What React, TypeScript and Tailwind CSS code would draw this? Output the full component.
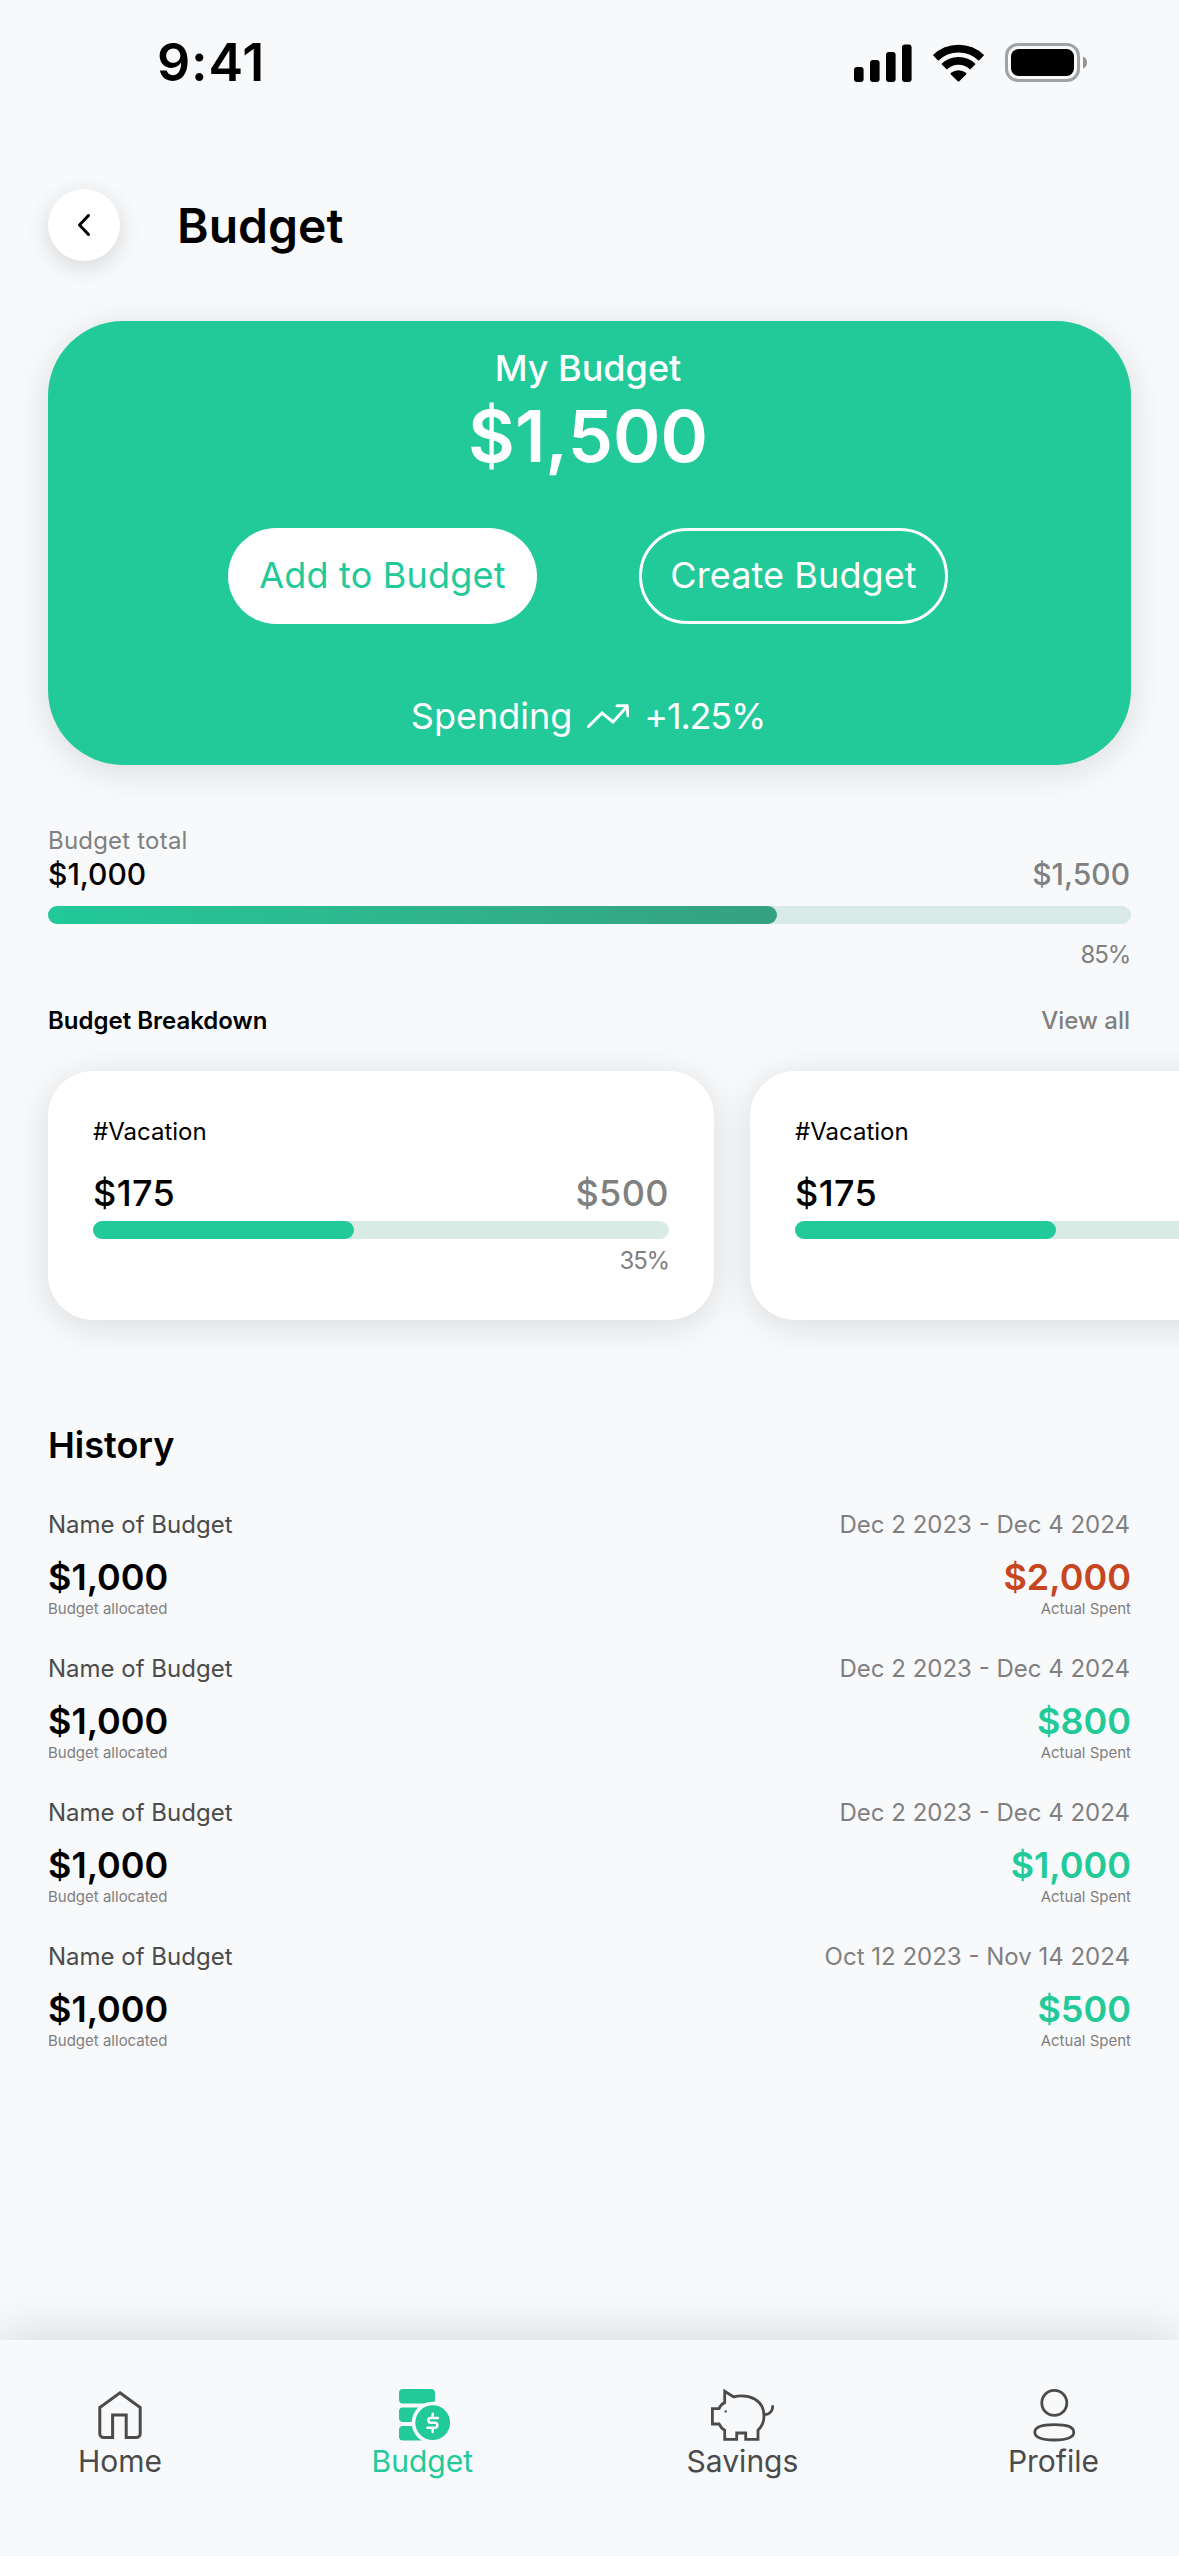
import type { ReactNode } from "react";

type Category = {
  id: number;
  name: string;
  spent: string;
  limit?: string;
  percent?: string;
};

type HistoryItem = {
  name: string;
  period: string;
  allocated: string;
  spent: string;
  overspent?: boolean;
};

const categories: Category[] = [
  { id: 1, name: "#Vacation", spent: "$175", limit: "$500", percent: "35%" },
  { id: 2, name: "#Vacation", spent: "$175" },
];

const history: HistoryItem[] = [
  {
    name: "Name of Budget",
    period: "Dec 2 2023 - Dec 4 2024",
    allocated: "$1,000",
    spent: "$2,000",
    overspent: true,
  },
  {
    name: "Name of Budget",
    period: "Dec 2 2023 - Dec 4 2024",
    allocated: "$1,000",
    spent: "$800",
  },
  {
    name: "Name of Budget",
    period: "Dec 2 2023 - Dec 4 2024",
    allocated: "$1,000",
    spent: "$1,000",
  },
  {
    name: "Name of Budget",
    period: "Oct 12 2023 - Nov 14 2024",
    allocated: "$1,000",
    spent: "$500",
  },
];

function StatusBar() {
  return (
    <div className="flex h-[125px] items-center justify-between pr-[92px] pl-[157px]">
      <span className="pt-px text-[52px] leading-none font-semibold tracking-[0.015em]">
        9:41
      </span>

      <div className="flex items-center gap-[21px]">
        <svg width="58" height="38" viewBox="0 0 58 38">
          <rect x="0" y="23" width="9.6" height="15" rx="3" />
          <rect x="16" y="16" width="9.6" height="22" rx="3" />
          <rect x="32" y="8" width="9.6" height="30" rx="3" />
          <rect x="48" y="0.4" width="9.6" height="37.6" rx="3" />
        </svg>

        <svg width="51" height="38" viewBox="0 0 51 38">
          <g fill="none" stroke="#000" strokeWidth="7.8">
            <path d="M2.5 13.9a33 33 0 0 1 46 0" />
            <path d="M11.1 22.8a20.6 20.6 0 0 1 28.8 0" />
          </g>
          <path d="M18 28.8a12.2 12.2 0 0 1 15 0q.9.8.1 1.6l-6.8 6.8q-.8.7-1.6 0l-6.8-6.8q-.8-.8.1-1.6z" />
        </svg>

        <svg width="82" height="39" viewBox="0 0 82 39">
          <rect
            x="1.5"
            y="1.5"
            width="72"
            height="36"
            rx="11.5"
            fill="none"
            stroke="#000"
            strokeOpacity="0.35"
            strokeWidth="3"
          />
          <rect x="6" y="6" width="63" height="27" rx="7.5" />
          <path d="M78 13.5v12a6.5 6.5 0 0 0 0-12z" fillOpacity="0.4" />
        </svg>
      </div>
    </div>
  );
}

function Header() {
  return (
    <header className="mt-16 flex items-center gap-[57px] px-12">
      <button className="flex size-[72px] items-center justify-center rounded-full bg-white shadow-[0_6px_24px_rgba(0,0,0,0.14)]">
        <svg width="24" height="24" viewBox="0 0 24 24" fill="none">
          <path
            d="M16.5 2.5 7.5 12l9 9.5"
            stroke="#000"
            strokeWidth="3"
            strokeLinecap="round"
            strokeLinejoin="round"
          />
        </svg>
      </button>
      <h1 className="pt-px text-[48px] leading-none font-semibold">Budget</h1>
    </header>
  );
}

function BalanceCard() {
  return (
    <section className="mx-12 mt-[60px] flex h-[444px] flex-col items-center rounded-[75px] bg-[#22c999] pt-[25px] pr-[3px] text-white shadow-[0_6px_36px_rgba(0,0,0,0.12)]">
      <p className="text-4xl leading-[44px] font-medium">My Budget</p>
      <p className="mt-0.5 text-7xl leading-[87px] font-semibold">$1,500</p>

      <div className="mt-[49px] flex gap-[102px]">
        <button className="h-24 w-[309px] rounded-full bg-white pb-0.5 text-4xl tracking-[0.2px] text-[#22c999]">
          Add to Budget
        </button>
        <button className="h-24 w-[309px] rounded-full border-[3px] border-white pb-0.5 text-4xl tracking-[0.1px]">
          Create Budget
        </button>
      </div>

      <div className="mt-[70px] flex items-center text-4xl leading-[44px]">
        <span>Spending</span>
        <svg
          width="42"
          height="24"
          viewBox="0 0 42 24"
          fill="none"
          className="mx-[15px]"
        >
          <g stroke="#fff" strokeWidth="3" strokeLinecap="round">
            <path d="M1.5 22.5 15 9l11 9L40 2.5" />
            <path d="M30 1.7h10l1 10" />
          </g>
        </svg>
        <span className="tracking-[-1.2px]">+1.25%</span>
      </div>
    </section>
  );
}

function BudgetTotal() {
  return (
    <section className="mx-12 mt-[61px]">
      <p className="text-2xl leading-[30px] tracking-[0.2px] text-[#808080]">
        Budget total
      </p>
      <div className="flex justify-between pr-px text-3xl leading-[36px] font-medium">
        <span>$1,000</span>
        <span className="text-[#808080]">$1,500</span>
      </div>
      <div className="mt-3.5 h-[18px] rounded-full bg-[#d9e9e5]">
        <div className="h-full w-[729px] rounded-full bg-linear-to-r from-[#22c999] to-[#35a17f]" />
      </div>
      <p className="mt-4 pr-px text-right text-2xl leading-[30px] tracking-[-1.2px] text-[#808080]">
        85%
      </p>
    </section>
  );
}

function Breakdown() {
  return (
    <section className="mt-9">
      <div className="flex justify-between pr-[49px] pl-12 text-2xl leading-[30px]">
        <h2 className="font-semibold">Budget Breakdown</h2>
        <span className="font-medium text-[#808080]">View all</span>
      </div>

      <div className="mt-[35px] flex gap-9 pl-12">
        {categories.map((category) => (
          <article
            key={category.id}
            className="h-[249px] w-[666px] shrink-0 rounded-[45px] bg-white px-[45px] pt-[46px] shadow-[0_6px_36px_rgba(0,0,0,0.12)]"
          >
            <p className="text-2xl leading-[30px]">{category.name}</p>
            <div className="mt-6 flex justify-between text-4xl leading-[44px] font-medium tracking-[0.4px]">
              <span>{category.spent}</span>
              {category.limit && (
                <span className="text-[#808080]">{category.limit}</span>
              )}
            </div>
            <div className="mt-1.5 h-[18px] rounded-full bg-[#daebe5]">
              <div className="h-full w-[261px] rounded-full bg-[#22c999]" />
            </div>
            {category.percent && (
              <p className="mt-[7px] text-right text-2xl leading-[30px] tracking-[-1.2px] text-[#808080]">
                {category.percent}
              </p>
            )}
          </article>
        ))}
      </div>
    </section>
  );
}

function History() {
  return (
    <section className="mx-12 mt-[103px]">
      <h2 className="text-4xl leading-[44px] font-semibold">History</h2>

      <ul className="mt-[43px] flex flex-col gap-[35px]">
        {history.map((item, index) => (
          <li key={index}>
            <div className="flex justify-between pr-px text-2xl leading-[30px]">
              <span className="text-[#4b4b4b]">{item.name}</span>
              <span className="text-[#808080]">{item.period}</span>
            </div>
            <div className="mt-[15px] flex justify-between text-4xl leading-[44px] font-semibold">
              <span>{item.allocated}</span>
              <span
                className={item.overspent ? "text-[#c74622]" : "text-[#22c999]"}
              >
                {item.spent}
              </span>
            </div>
            <div className="mt-px mb-px flex justify-between text-[15px] leading-[18px] text-[#808080]">
              <span>Budget allocated</span>
              <span>Actual Spent</span>
            </div>
          </li>
        ))}
      </ul>
    </section>
  );
}

function HomeIcon() {
  return (
    <svg width="54" height="54" viewBox="0 0 54 54" fill="none">
      <path
        d="M27 4.8 47.2 19.5v26a4 4 0 0 1-4 4H33.2V27H19.6v22.5H10.8a4 4 0 0 1-4-4v-26z"
        stroke="currentColor"
        strokeWidth="3"
      />
    </svg>
  );
}

function BudgetIcon() {
  return (
    <svg
      width="54"
      height="54"
      viewBox="0 0 54 54"
      fill="currentColor"
      className="overflow-visible"
    >
      <rect x="4" y="1" width="36" height="14.6" rx="4" />
      <rect x="4" y="19.5" width="36" height="14.6" rx="4" />
      <rect x="4" y="38" width="36" height="14.6" rx="4" />
      <circle cx="37.7" cy="34.7" r="21" fill="#f8f9fb" />
      <circle cx="37.7" cy="34.7" r="17.4" />
      <path
        d="M42.9 30h-7.2a2.35 2.35 0 0 0 0 4.7h4.2a2.5 2.5 0 0 1 0 5h-7.5M37.7 25.7V30M37.7 39.7v4.2"
        fill="none"
        stroke="#f8f9fb"
        strokeWidth="2.5"
        strokeLinecap="round"
      />
    </svg>
  );
}

function SavingsIcon() {
  return (
    <svg width="63" height="54" viewBox="0 0 63 54" fill="none">
      <g stroke="currentColor" strokeWidth="2.8">
        <path d="M13.7 3.3 22.3 8.8C38 5.5 53 11.5 53 28c0 6-2.5 11-6 14.3v9H34.7V45h-9v6.3h-12v-9Q10 40 8 36H1.4V20.7H8q1.5-4.5 5.7-6z" />
        <path d="M53.5 26.7c5 0 8.3-3.7 8.3-9.5" />
      </g>
      <circle cx="14.7" cy="23.4" r="1.2" fill="currentColor" />
    </svg>
  );
}

function ProfileIcon() {
  return (
    <svg width="54" height="54" viewBox="0 0 54 54" fill="none">
      <g stroke="currentColor" strokeWidth="2.8">
        <circle cx="28.3" cy="14.9" r="12.5" />
        <path d="M28.3 36.6c13 0 19.5 2.2 19.5 7.7s-6.5 7.7-19.5 7.7-19.5-2.2-19.5-7.7 6.5-7.7 19.5-7.7z" />
      </g>
    </svg>
  );
}

function NavItem({
  icon,
  label,
  active,
}: {
  icon: ReactNode;
  label: string;
  active?: boolean;
}) {
  return (
    <a
      className={`flex flex-col items-center gap-px text-3xl leading-9 ${
        active ? "text-[#22c999]" : "text-[#4b4b4b]"
      }`}
    >
      {icon}
      <span>{label}</span>
    </a>
  );
}

function BottomNav() {
  return (
    <nav className="mt-auto flex h-[216px] items-start justify-between bg-[#f8f9fb] pr-[80px] pl-[78px] pt-12 shadow-[0_-6px_48px_rgba(0,0,0,0.13)]">
      <NavItem icon={<HomeIcon />} label="Home" />
      <NavItem icon={<BudgetIcon />} label="Budget" active />
      <div className="pl-1">
        <NavItem icon={<SavingsIcon />} label="Savings" />
      </div>
      <NavItem icon={<ProfileIcon />} label="Profile" />
    </nav>
  );
}

export default function App() {
  return (
    <main className="flex h-[2556px] w-[1179px] flex-col overflow-hidden bg-[#f8f9fb] font-['Inter',sans-serif] text-black">
      <StatusBar />
      <Header />
      <BalanceCard />
      <BudgetTotal />
      <Breakdown />
      <History />
      <BottomNav />
    </main>
  );
}
